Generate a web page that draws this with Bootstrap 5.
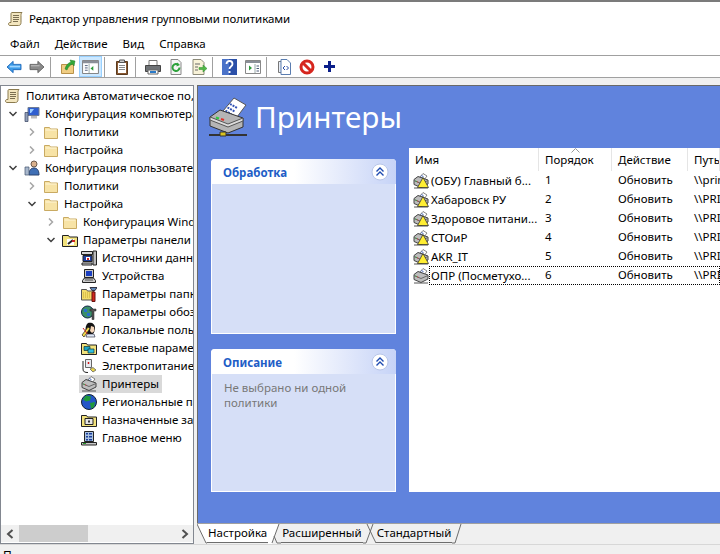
<!DOCTYPE html>
<html lang="ru">
<head>
<meta charset="utf-8">
<title>Редактор управления групповыми политиками</title>
<link href="https://cdn.jsdelivr.net/npm/bootstrap@5.3.0/dist/css/bootstrap.min.css" rel="stylesheet">
<style>
html,body{width:720px;height:554px;overflow:hidden}
body{font-family:"Noto Sans","Open Sans",sans-serif;font-size:11.5px;line-height:18px;color:#000;background:#f0f0f0}
svg{display:block;flex:none}
.ico{width:16px;height:16px}
.wtitle{height:36px;background:#fff;border-top:2px solid #7b7b7b;padding-left:8px;gap:5px;letter-spacing:-.1px}
.wmenu{height:20px;background:#fff;border-bottom:1px solid #a0a0a0;padding:0 10px 3px;gap:15px}
.wtools{height:22px;background:#fff;border-bottom:1px solid #a0a0a0;padding-left:2px}
.tb{width:23px;height:21px;flex:none}
.tgap{margin-left:3px}
.tbh{background:#cce8ff;border:1px solid #99d1ff}
.tsep{width:1px;height:20px;background:#a0a0a0;flex:none;margin:0 2px}
.wmain{height:466px;padding-top:7px}
.treepane{width:194px;border:1px solid #828790;flex:none;background:#fff}
.treebody{height:439px;overflow:hidden;padding-top:1px}
.trow{height:18px;padding-left:4px;white-space:nowrap}
.ind{flex:none;height:18px;justify-content:flex-end;padding-right:7px}
.i1{width:19px}.i2{width:38px}.i3{width:57px}.i4{width:76px}
.tnode{gap:5px;height:18px;flex:none;padding-right:3px}
.tsel{background:#d9d9d9;margin-left:-2px;padding-left:2px}
.hscroll{height:17px;background:#f0f0f0}
.sthumb{width:69px;height:17px;background:#cdcdcd;margin:0 auto 0 1px}
.sbtn{width:17px;height:17px;flex:none}
.rightcol{width:526px;margin-left:3px;flex:none}
.bluearea{height:438px;flex:none;background:#6083dd;border-top:1px solid #696969;border-left:1px solid #696969;overflow:hidden}
.bhead{height:62px;padding-left:10px;gap:7px;color:#fff;font-size:29.7px;line-height:40px}
.bcols{padding-left:13px;gap:13px}
.leftp{width:185px;flex:none;padding-top:11px;gap:15px}
.tpanel{background:#d6dff7;border:1px solid #fff;border-top:0;border-radius:4px 4px 0 0}
.tphead{height:25px;background:linear-gradient(90deg,#fff 0,#fff 45%,#c6d3f7 100%);border-radius:4px 4px 0 0;margin:0 -1px;padding:2px 7px 0 12px;color:#215dc6;font-weight:700}
.tphead svg{margin-top:-2px}
.p1{height:175px}
.p2{height:143px}
.tpbody{padding:6px 12px;color:#787878;line-height:15px}
.lst{width:311px;height:344px;background:#fff;overflow:hidden;flex:none}
.lrow{height:19px;white-space:nowrap;position:relative}
.lhead{height:23px;color:#000;position:relative}
.lhead .c{border-right:1px solid #e5e5e5;height:23px;padding-top:3px}
.c{flex:none;padding-left:6px;overflow:hidden}
.c1{width:130px}.c2{width:73px}.c3{width:76px}.c4{width:32px}
.c1b{padding-left:4px;gap:2px;display:flex;align-items:center}
.lrows .c4{white-space:nowrap}
.lfocus::after{content:"";position:absolute;left:20px;right:0;top:0;bottom:0;border:1px dotted #000}
.sorta{position:absolute;left:162px;top:0}
.tabstrip{height:21px;flex:none;background:#f0f0f0;border-top:1px solid #a0a0a0}
.tabcell{height:19px;line-height:18px;padding:0 1px;flex:none;white-space:nowrap}
.tabon{background:#fff;border-bottom:1px solid #6d6d6d}
.taboff{border-bottom:1px solid #6d6d6d;background:#f0f0f0}
.wstatus{height:10px;border-top:1px solid #d7d7d7;padding:2px 0 0 3px;overflow:hidden;line-height:18px;font-size:12px}
</style>
</head>
<body>
<svg width="0" height="0" class="position-absolute">
<defs>
<symbol id="scroll" viewBox="0 0 16 16"><path d="M4 1.500h10c-1 1-1 2-1 3v7c0 2-1 3-2.500 3H2c-1 0-1.500-.7-1.500-1.500S1 11.500 2 11.500h1V3c0-1 .3-1.500 1-1.500z" fill="#f3e6bf" stroke="#8a7a4e"/><path d="M5 4.500h6M5 6.500h6M5 8.500h6M5 10.500h5" stroke="#7a6f52"/></symbol>
<symbol id="folder" viewBox="0 0 16 16"><path d="M1.500 3.500h5l1 1.500h7v9.500h-13z" fill="#f7e3a6" stroke="#c9aa62"/><path d="M2.500 6h11" stroke="#fff6d8"/></symbol>
<symbol id="folderp" viewBox="0 0 16 16"><path d="M.5 3.500h6l1 1.500h8v9.500H.5z" fill="#f2e27c" stroke="#222"/><path d="M5 7h7v6H5z" fill="#fff"/><path d="M6 12l5-4" stroke="#222" stroke-width="2"/><path d="M10 8h3v2h-3z" fill="#c22"/></symbol>
<symbol id="comp" viewBox="0 0 16 16"><path d="M4 1.500h11v8H4z" fill="#2f5fd0" stroke="#6f7c95"/><path d="M6 3h4l-3 4H6z" fill="#9fd0ff"/><path d="M7 10h6v2.500H7z" fill="#bbb"/><path d="M1 6.500h3v9H1z" fill="#92a0b8" stroke="#33415e" stroke-width=".7"/></symbol>
<symbol id="usr" viewBox="0 0 16 16"><circle cx="10" cy="4" r="3" fill="#d9b08c" stroke="#6b5a4c"/><path d="M5 15c0-5 2-7 5-7s5 2 5 7z" fill="#3f6fb5" stroke="#2b4470"/><path d="M1 7h4v8H1z" fill="#a8b7cc" stroke="#44536e" stroke-width=".7"/></symbol>
<symbol id="srv" viewBox="0 0 16 16"><path d="M.5 1.500h11v3h-11z" fill="#d7d7d7" stroke="#222"/><path d="M12 1h3.500v14H12z" fill="#bbb" stroke="#222"/><path d="M2 5.500h9v6H2z" fill="#1f3fa0" stroke="#222"/><path d="M5 7h4v3H5z" fill="#fff"/><path d="M6 8h2v2H6z" fill="#c22"/><path d="M1 13h10v2H1z" fill="#cfcfcf" stroke="#222"/></symbol>
<symbol id="dev" viewBox="0 0 16 16"><path d="M3.500 1.500h9v8h-9z" fill="#c9c9c9" stroke="#222"/><path d="M5 3h6v5H5z" fill="#1a3ec0"/><path d="M1.500 12.500l2-2.500h9l2 2.500v2h-13z" fill="#c9c9c9" stroke="#222"/><path d="M4 12h8" stroke="#555"/></symbol>
<symbol id="tools" viewBox="0 0 16 16"><path d="M.5 3.500h5l1 1.500h6v9H.5z" fill="#f2dc6a" stroke="#555"/><path d="M2 7h7M2 9h7M2 11h7" stroke="#c6a92f" stroke-dasharray="1 1"/><path d="M11 6h3v9.500h-3z" fill="#d2281c" stroke="#611"/><path d="M9 1.500h7L14 4.500h-3z" fill="#5f86b5" stroke="#334"/></symbol>
<symbol id="tools2" viewBox="0 0 16 16"><circle cx="6.500" cy="8" r="6" fill="#3b8f6a" stroke="#124"/><path d="M3 5h3v3H3zM6 9h3v3H6z" fill="#2a6fcf"/><path d="M9 5h6v2h-2v8.500h-2V7H9z" fill="#555" stroke="#222" stroke-width=".5"/></symbol>
<symbol id="lusr" viewBox="0 0 16 16"><path d="M7 1c4-1 7 1 7 5s-2 7-5 7c-2 0-3-1-4-3-1-3-.5-7 2-9z" fill="#141414"/><path d="M10 4l3 1 .5 4-2.500 2-2-2z" fill="#f5d5b8"/><path d="M1 13l6-8 2 1.500-6 8.500z" fill="#f0d84a" stroke="#222" stroke-width=".7"/><path d="M2 6l6 8" stroke="#c22"/><path d="M6 12h7l1 3H5z" fill="#dfe7f5" stroke="#223" stroke-width=".6"/></symbol>
<symbol id="net" viewBox="0 0 16 16"><path d="M.5 3.500h5l1 1.500h9v9.500H.5z" fill="#f2e27c" stroke="#222"/><path d="M3 6.500h6v4H3z" fill="#19a3c4" stroke="#133" stroke-width=".7"/><path d="M7 9h6v4H7z" fill="#2ec0e0" stroke="#133" stroke-width=".7"/></symbol>
<symbol id="pow" viewBox="0 0 16 16"><path d="M4.500 1.500h6v8h-6z" fill="#e7eaf0" stroke="#666"/><path d="M6.500 5h2M7.500 4v2" stroke="#d01818"/><path d="M2 3v8c0 3 2 3.500 5 3.500" fill="none" stroke="#222"/><path d="M9 11l3-1.500 3 2.500-3 2z" fill="#e7d44c" stroke="#555" stroke-width=".7"/></symbol>
<symbol id="prn" viewBox="0 0 16 16"><path d="M6 5l4-4.500 4 2.500-3 4z" fill="#fff" stroke="#555" stroke-width=".7"/><path d="M8.500 2.500l2 1.200M7.500 3.800l2 1.200" stroke="#3b5fb5"/><path d="M1 6.500l4-3 10 3.500v4l-7 3.500-7-3z" fill="#bdbdbd" stroke="#444"/><path d="M1 7.500l7 3 7-3" fill="none" stroke="#666"/><path d="M2.500 8l1 .4" stroke="#2b2"/><path d="M4.300 8.800l1 .4" stroke="#d22"/><path d="M1 15h14" stroke="#555"/></symbol>
<symbol id="globe" viewBox="0 0 16 16"><circle cx="8" cy="8" r="7.500" fill="#2456c8" stroke="#123"/><path d="M5 1.500l5 1-1 4-4 1-3-2zM9 9l5-1-1 5-3 1.500z" fill="#1f9a3a"/></symbol>
<symbol id="task" viewBox="0 0 16 16"><path d="M.5 3.500h5l1 1.500h9v9.500H.5z" fill="#f2e27c" stroke="#222"/><path d="M4 6.500h8v6H4z" fill="#e7e7e7" stroke="#222"/><path d="M7 8.500h2v2H7z" fill="#333"/></symbol>
<symbol id="menu" viewBox="0 0 16 16"><path d="M3.500 1.500h9v10h-9z" fill="#a8c0e0" stroke="#222"/><path d="M5 3h2v1.500H5zM8 3h3v1.500H8zM5 6h2v1.500H5zM8 6h3v1.500H8zM5 9h2v1.500H5zM8 9h3v1.500H8z" fill="#1b3f9b"/><path d="M.5 12.500h15v2.500H.5z" fill="#c9c9c9" stroke="#222"/><path d="M2 13.500h3" stroke="#2a9a2a"/></symbol>
<symbol id="warn" viewBox="0 0 16 16"><path d="M10 4.500L15.500 14.500H4.500z" fill="#ffee33" stroke="#222" stroke-width=".7"/></symbol>
<symbol id="chd" viewBox="0 0 8 8"><path d="M.5 2l3.500 3.500L7.500 2" fill="none" stroke="#3c3c3c" stroke-width="1.500"/></symbol>
<symbol id="chr" viewBox="0 0 8 8"><path d="M2 .5L5.500 4 2 7.500" fill="none" stroke="#a6a6a6" stroke-width="1.500"/></symbol>
<symbol id="collapse" viewBox="0 0 18 18"><circle cx="9" cy="9" r="8" fill="#fff" stroke="#b9c6e8"/><path d="M5.500 8.500L9 5l3.500 3.500M5.500 12.500L9 9l3.500 3.500" fill="none" stroke="#1f4bb0" stroke-width="1.400"/></symbol>
</defs>
</svg>

<div class="wtitle d-flex align-items-center"><svg class="ico"><use href="#scroll"/></svg><span>Редактор управления групповыми политиками</span></div>

<nav class="wmenu d-flex align-items-center"><span>Файл</span><span>Действие</span><span>Вид</span><span>Справка</span></nav>

<div class="wtools d-flex align-items-center">
 <span class="tb d-flex align-items-center justify-content-center"><svg width="16" height="14" viewBox="0 0 18 16"><path d="M1 8l7-6.500V5h9v6H8v3.500z" fill="#3c9be8" stroke="#1c66b8"/><path d="M4 7.500h12" stroke="#9fd5ff" stroke-width="2"/></svg></span>
 <span class="tb d-flex align-items-center justify-content-center"><svg width="16" height="14" viewBox="0 0 18 16"><path d="M17 8l-7-6.500V5H1v6h9v3.500z" fill="#8a8a8a" stroke="#5f5f5f"/><path d="M2 6.500h10" stroke="#b5b5b5" stroke-width="1.500"/></svg></span>
 <span class="tsep"></span>
 <span class="tb tgap d-flex align-items-center justify-content-center"><svg class="ico"><path d="M1.500 5.500h12v9h-12z" fill="#f0cd83" stroke="#b9924a"/><path d="M5 10c1-4 3-6 6-7l-1-2 5 1-1 5-1.500-2C10 6 8 8 7 11z" fill="#32a838" stroke="#1e7a26" stroke-width=".5"/></svg></span>
 <span class="tb tbh d-flex align-items-center justify-content-center"><svg width="17" height="14" viewBox="0 0 18 15"><path d="M.5.500h17v14H.5z" fill="#fff" stroke="#7a7a7a"/><path d="M1 1h16v2.500H1z" fill="#8a8f98"/><path d="M3 6h3M3 8.500h3M3 11h3" stroke="#4a5a78"/><path d="M12 6.500v5L9 9z" fill="#2c9a3a"/><path d="M7.500 4v10" stroke="#9aa"/></svg></span>
 <span class="tsep"></span>
 <span class="tb tgap d-flex align-items-center justify-content-center"><svg class="ico"><path d="M2.500 2.500h11v13h-11z" fill="#8a5a32" stroke="#5b3a1e"/><path d="M4 4h8v10H4z" fill="#fff"/><path d="M5 6.500h6M5 8.500h6M5 10.500h6" stroke="#888"/><path d="M5.500 1h5v2.500h-5z" fill="#ccc" stroke="#555"/></svg></span>
 <span class="tsep"></span>
 <span class="tb tgap d-flex align-items-center justify-content-center"><svg class="ico"><path d="M4 1.500h8v5H4z" fill="#fff" stroke="#777"/><path d="M.5 6.500h15v6h-15z" fill="#6e7276" stroke="#444"/><path d="M3 11h10v4H3z" fill="#fff" stroke="#666"/><path d="M5 13h6" stroke="#2a7ac8" stroke-width="2"/></svg></span>
 <span class="tb d-flex align-items-center justify-content-center"><svg class="ico"><path d="M3 .500h7l3 3v12H3z" fill="#f5f5f5" stroke="#888"/><path d="M11.500 8.500a3.500 3.500 0 1 1-1-2.500" fill="none" stroke="#2ea23c" stroke-width="2"/><path d="M9 3.500l3 2.500-3.500 1.500z" fill="#2ea23c"/></svg></span>
 <span class="tb d-flex align-items-center justify-content-center"><svg class="ico"><path d="M2 .500h8l3 3v12H2z" fill="#f8f2d8" stroke="#8c8a78"/><path d="M4 5h5M4 8h3M4 11h3" stroke="#666"/><path d="M8 8.500h4V6l4 3.500-4 3.500v-2.500H8z" fill="#52b848" stroke="#2c8a2a" stroke-width=".5"/></svg></span>
 <span class="tsep"></span>
 <span class="tb tgap d-flex align-items-center justify-content-center"><svg width="15" height="16" viewBox="0 0 15 16"><path d="M0 0h15v16H0z" fill="#2b50a8"/><path d="M0 0h7v16H0z" fill="#4a72c8"/><path d="M4.500 5c0-4 6-4 6 0 0 2.500-3 2.500-3 5" fill="none" stroke="#fff" stroke-width="1.800"/><path d="M6.500 12h2v2h-2z" fill="#fff"/></svg></span>
 <span class="tb d-flex align-items-center justify-content-center"><svg width="16" height="14" viewBox="0 0 16 14"><path d="M.5.500h15v13H.5z" fill="#fff" stroke="#888"/><path d="M1 1h14v2H1z" fill="#8a8f98"/><path d="M4 5.500v5l3-2.500z" fill="#2c9a3a"/><path d="M10 4v9" stroke="#9aa"/><path d="M11.500 6h2.500M11.500 8.500h2.500M11.500 11h2.500" stroke="#4a5a78"/></svg></span>
 <span class="tsep"></span>
 <span class="tb tgap d-flex align-items-center justify-content-center"><svg class="ico"><path d="M2.500 2.500h7v11h-7z" fill="#e8eef8" stroke="#777"/><path d="M5 .500h6l3.500 3.500v11.500H5z" fill="#fff" stroke="#5a7db0"/><path d="M9 7L7 9l2 2M10.500 7l2 2-2 2" fill="none" stroke="#2b4ea8"/></svg></span>
 <span class="tb d-flex align-items-center justify-content-center"><svg class="ico"><circle cx="8" cy="8" r="6" fill="#fff" stroke="#d6261e" stroke-width="3"/><path d="M3.500 3.500l9 9" stroke="#d6261e" stroke-width="3"/></svg></span>
 <span class="tb d-flex align-items-center justify-content-center"><svg width="11" height="11" viewBox="0 0 11 11"><path d="M4 0h3v4h4v3H7v4H4V7H0V4h4z" fill="#0b1f8a"/></svg></span>
</div>

<main class="wmain d-flex">
 <section class="treepane d-flex flex-column">
  <div class="treebody">
   <div class="trow d-flex align-items-center"><div class="tnode d-flex align-items-center"><svg class="ico"><use href="#scroll"/></svg><span>Политика Автоматическое по, отдел</span></div></div>
   <div class="trow d-flex align-items-center"><div class="ind i1 d-flex align-items-center"><svg width="8" height="8"><use href="#chd"/></svg></div><div class="tnode d-flex align-items-center"><svg class="ico"><use href="#comp"/></svg><span>Конфигурация компьютера</span></div></div>
   <div class="trow d-flex align-items-center"><div class="ind i2 d-flex align-items-center"><svg width="8" height="8"><use href="#chr"/></svg></div><div class="tnode d-flex align-items-center"><svg class="ico"><use href="#folder"/></svg><span>Политики</span></div></div>
   <div class="trow d-flex align-items-center"><div class="ind i2 d-flex align-items-center"><svg width="8" height="8"><use href="#chr"/></svg></div><div class="tnode d-flex align-items-center"><svg class="ico"><use href="#folder"/></svg><span>Настройка</span></div></div>
   <div class="trow d-flex align-items-center"><div class="ind i1 d-flex align-items-center"><svg width="8" height="8"><use href="#chd"/></svg></div><div class="tnode d-flex align-items-center"><svg class="ico"><use href="#usr"/></svg><span>Конфигурация пользователя</span></div></div>
   <div class="trow d-flex align-items-center"><div class="ind i2 d-flex align-items-center"><svg width="8" height="8"><use href="#chr"/></svg></div><div class="tnode d-flex align-items-center"><svg class="ico"><use href="#folder"/></svg><span>Политики</span></div></div>
   <div class="trow d-flex align-items-center"><div class="ind i2 d-flex align-items-center"><svg width="8" height="8"><use href="#chd"/></svg></div><div class="tnode d-flex align-items-center"><svg class="ico"><use href="#folder"/></svg><span>Настройка</span></div></div>
   <div class="trow d-flex align-items-center"><div class="ind i3 d-flex align-items-center"><svg width="8" height="8"><use href="#chr"/></svg></div><div class="tnode d-flex align-items-center"><svg class="ico"><use href="#folder"/></svg><span>Конфигурация Windows</span></div></div>
   <div class="trow d-flex align-items-center"><div class="ind i3 d-flex align-items-center"><svg width="8" height="8"><use href="#chd"/></svg></div><div class="tnode d-flex align-items-center"><svg class="ico"><use href="#folderp"/></svg><span>Параметры панели управления</span></div></div>
   <div class="trow d-flex align-items-center"><div class="ind i4"></div><div class="tnode d-flex align-items-center"><svg class="ico"><use href="#srv"/></svg><span>Источники данных</span></div></div>
   <div class="trow d-flex align-items-center"><div class="ind i4"></div><div class="tnode d-flex align-items-center"><svg class="ico"><use href="#dev"/></svg><span>Устройства</span></div></div>
   <div class="trow d-flex align-items-center"><div class="ind i4"></div><div class="tnode d-flex align-items-center"><svg class="ico"><use href="#tools"/></svg><span>Параметры папки</span></div></div>
   <div class="trow d-flex align-items-center"><div class="ind i4"></div><div class="tnode d-flex align-items-center"><svg class="ico"><use href="#tools2"/></svg><span>Параметры обозревателя</span></div></div>
   <div class="trow d-flex align-items-center"><div class="ind i4"></div><div class="tnode d-flex align-items-center"><svg class="ico"><use href="#lusr"/></svg><span>Локальные пользователи</span></div></div>
   <div class="trow d-flex align-items-center"><div class="ind i4"></div><div class="tnode d-flex align-items-center"><svg class="ico"><use href="#net"/></svg><span>Сетевые параметры</span></div></div>
   <div class="trow d-flex align-items-center"><div class="ind i4"></div><div class="tnode d-flex align-items-center"><svg class="ico"><use href="#pow"/></svg><span>Электропитание</span></div></div>
   <div class="trow d-flex align-items-center"><div class="ind i4"></div><div class="tnode tsel d-flex align-items-center"><svg class="ico"><use href="#prn"/></svg><span>Принтеры</span></div></div>
   <div class="trow d-flex align-items-center"><div class="ind i4"></div><div class="tnode d-flex align-items-center"><svg class="ico"><use href="#globe"/></svg><span>Региональные параметры</span></div></div>
   <div class="trow d-flex align-items-center"><div class="ind i4"></div><div class="tnode d-flex align-items-center"><svg class="ico"><use href="#task"/></svg><span>Назначенные задания</span></div></div>
   <div class="trow d-flex align-items-center"><div class="ind i4"></div><div class="tnode d-flex align-items-center"><svg class="ico"><use href="#menu"/></svg><span>Главное меню</span></div></div>
  </div>
  <div class="hscroll d-flex align-items-center">
   <span class="sbtn d-flex align-items-center justify-content-center"><svg width="8" height="10" viewBox="0 0 8 10"><path d="M6.500 1L2 5l4.500 4" fill="none" stroke="#505050" stroke-width="2"/></svg></span>
   <span class="sthumb"></span>
   <span class="sbtn d-flex align-items-center justify-content-center"><svg width="8" height="10" viewBox="0 0 8 10"><path d="M1.500 1L6 5 1.500 9" fill="none" stroke="#505050" stroke-width="2"/></svg></span>
  </div>
 </section>

 <section class="rightcol d-flex flex-column">
  <div class="bluearea">
   <header class="bhead d-flex align-items-center">
    <svg width="40" height="40" viewBox="0 0 40 40"><path d="M15 14L26 1l12 7-9 12z" fill="#fff" stroke="#555"/><path d="M22 7l7 4M19.500 10.500l7 4M17.500 13.500l6 4" stroke="#3353b5" stroke-width="2" stroke-dasharray="2 1"/><path d="M2 20l10-7 23 8v9l-15 6-18-7z" fill="#b5b5b5" stroke="#333"/><path d="M2 20l18 7 15-6v3l-15 6-18-7z" fill="#dcdcdc" stroke="#555"/><path d="M8 20.500l3 1" stroke="#2ecc40" stroke-width="2"/><path d="M13 22l3 1" stroke="#e0322a" stroke-width="2"/><path d="M1 38h38" stroke="#333" stroke-width="2"/><path d="M12 35h6v4h-6z" fill="#d8c21e" stroke="#333"/></svg>
    <span>Принтеры</span>
   </header>
   <div class="bcols d-flex">
    <div class="leftp d-flex flex-column">
     <div class="tpanel p1">
      <div class="tphead d-flex align-items-center justify-content-between"><span>Обработка</span><svg width="18" height="18"><use href="#collapse"/></svg></div>
     </div>
     <div class="tpanel p2">
      <div class="tphead d-flex align-items-center justify-content-between"><span>Описание</span><svg width="18" height="18"><use href="#collapse"/></svg></div>
      <div class="tpbody">Не выбрано ни одной политики</div>
     </div>
    </div>
    <div class="lst">
     <div class="lhead d-flex">
      <div class="c c1">Имя</div><div class="c c2">Порядок</div><div class="c c3">Действие</div><div class="c c4">Путь</div>
      <svg class="sorta" width="9" height="5" viewBox="0 0 9 5"><path d="M.5 4.500L4.500.5l4 4" fill="none" stroke="#9a9a9a"/></svg>
     </div>
     <div class="lrows">
      <div class="lrow d-flex"><div class="c c1 c1b"><span class="position-relative d-block ico"><svg class="ico"><use href="#prn"/></svg><svg class="ico position-absolute top-0 start-0"><use href="#warn"/></svg></span><span>(ОБУ) Главный б...</span></div><div class="c c2">1</div><div class="c c3">Обновить</div><div class="c c4">\\print</div></div>
      <div class="lrow d-flex"><div class="c c1 c1b"><span class="position-relative d-block ico"><svg class="ico"><use href="#prn"/></svg><svg class="ico position-absolute top-0 start-0"><use href="#warn"/></svg></span><span>Хабаровск РУ</span></div><div class="c c2">2</div><div class="c c3">Обновить</div><div class="c c4">\\PRIN</div></div>
      <div class="lrow d-flex"><div class="c c1 c1b"><span class="position-relative d-block ico"><svg class="ico"><use href="#prn"/></svg><svg class="ico position-absolute top-0 start-0"><use href="#warn"/></svg></span><span>Здоровое питани...</span></div><div class="c c2">3</div><div class="c c3">Обновить</div><div class="c c4">\\PRIN</div></div>
      <div class="lrow d-flex"><div class="c c1 c1b"><span class="position-relative d-block ico"><svg class="ico"><use href="#prn"/></svg><svg class="ico position-absolute top-0 start-0"><use href="#warn"/></svg></span><span>СТОиР</span></div><div class="c c2">4</div><div class="c c3">Обновить</div><div class="c c4">\\PRIN</div></div>
      <div class="lrow d-flex"><div class="c c1 c1b"><span class="position-relative d-block ico"><svg class="ico"><use href="#prn"/></svg><svg class="ico position-absolute top-0 start-0"><use href="#warn"/></svg></span><span>AKR_IT</span></div><div class="c c2">5</div><div class="c c3">Обновить</div><div class="c c4">\\PRIN</div></div>
      <div class="lrow lfocus d-flex"><div class="c c1 c1b"><span class="position-relative d-block ico"><svg class="ico"><use href="#prn"/></svg></span><span>ОПР (Посметухо...</span></div><div class="c c2">6</div><div class="c c3">Обновить</div><div class="c c4">\\PRIN</div></div>
     </div>
    </div>
   </div>
  </div>
  <div class="tabstrip d-flex">
   <svg width="10" height="20" viewBox="0 0 10 20"><path d="M0 0l9 19h1V0z" fill="#fff"/><path d="M0 0l9 19h1" fill="none" stroke="#6d6d6d"/></svg>
   <div class="tabcell tabon">Настройка</div>
   <svg width="13" height="20" viewBox="0 0 13 20"><path d="M0 0v19h4L11 0z" fill="#fff"/><path d="M4 19L11 0M6 12l3 7h4" fill="none" stroke="#6d6d6d"/><path d="M0 19.500h4" stroke="#fff"/></svg>
   <div class="tabcell taboff">Расширенный</div>
   <svg width="13" height="20" viewBox="0 0 13 20"><path d="M0 19h3M3 19L10 0M4 0l6 13 3 6" fill="none" stroke="#6d6d6d"/></svg>
   <div class="tabcell taboff">Стандартный</div>
   <svg width="10" height="20" viewBox="0 0 10 20"><path d="M0 19h3L9 0" fill="none" stroke="#6d6d6d"/></svg>
  </div>
 </section>
</main>

<footer class="wstatus">П</footer>
<script src="https://cdn.jsdelivr.net/npm/bootstrap@5.3.0/dist/js/bootstrap.bundle.min.js"></script>
</body>
</html>
